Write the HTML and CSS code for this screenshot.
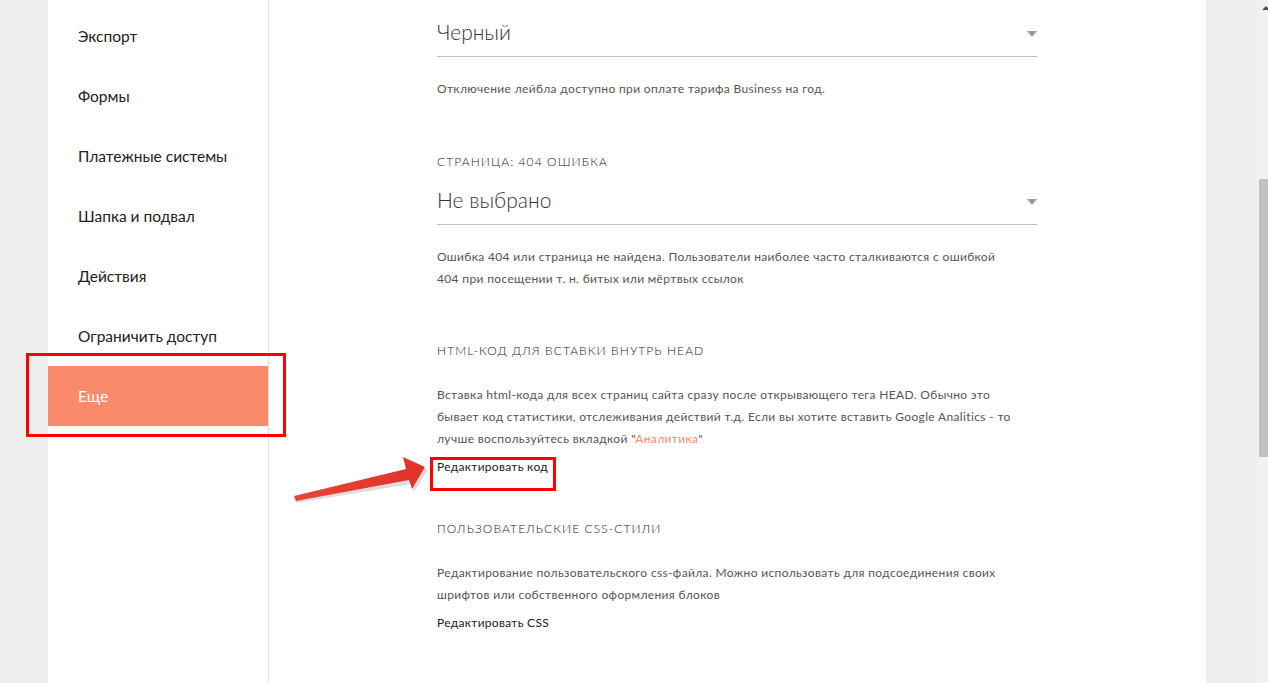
FILE: index.html
```html
<!DOCTYPE html>
<html lang="ru">
<head>
  <meta charset="UTF-8">
  <title>Настройки сайта</title>
  <link rel="stylesheet" href="styles.css">
</head>

<body>
  <div class="panel">
    <aside class="sidebar">
      <ul>
        <li><a href="#">Экспорт</a></li>
        <li><a href="#">Формы</a></li>
        <li><a href="#">Платежные системы</a></li>
        <li><a href="#">Шапка и подвал</a></li>
        <li><a href="#">Действия</a></li>
        <li><a href="#">Ограничить доступ</a></li>
        <li class="active"><a href="#">Еще</a><span class="mark mark-menu"></span></li>
      </ul>
    </aside>

    <main class="content">
      <div class="section">
        <div class="select">Черный<span class="caret"></span></div>
        <p class="note">Отключение лейбла доступно при оплате тарифа Business на год.</p>
      </div>

      <div class="section">
        <h3>Страница: 404 ошибка</h3>
        <div class="select">Не выбрано<span class="caret"></span></div>
        <p class="note">Ошибка 404 или страница не найдена. Пользователи наиболее часто сталкиваются с ошибкой 404&nbsp;при посещении т. н. битых или мёртвых ссылок</p>
      </div>

      <div class="section">
        <h3>HTML-код для вставки внутрь HEAD</h3>
        <p class="desc">Вставка html-кода для всех страниц сайта сразу после открывающего тега HEAD. Обычно это бывает&nbsp;код статистики, отслеживания действий т.д. Если вы хотите вставить Google Analitics - то лучше воспользуйтесь вкладкой "<a href="#">Аналитика</a>"</p>
        <a class="edit" href="#">Редактировать код<span class="mark mark-edit"></span></a>
      </div>

      <div class="section section-tight">
        <h3>Пользовательские css-стили</h3>
        <p class="desc">Редактирование пользовательского css-файла. Можно использовать для подсоединения своих шрифтов или собственного оформления блоков</p>
        <a class="edit" href="#">Редактировать CSS</a>
      </div>
    </main>
  </div>

  <!-- annotation arrow -->
  <svg class="arrow" width="1268" height="683" viewBox="0 0 1268 683">
    <defs>
      <linearGradient id="arrowFill" x1="0" y1="0" x2="1" y2="0">
        <stop offset="0" stop-color="#e8453a"/>
        <stop offset="1" stop-color="#df3328"/>
      </linearGradient>
    </defs>
    <polygon points="296,503 411,484 414,492 428,470 405,461 407,473 294,497" fill="#bbb" opacity="0.5"/>
    <polygon points="294,496 406,469 403,457 425,467 412,489 409,480 296,501" fill="url(#arrowFill)"/>
  </svg>

  <div class="scrollbar">
    <span class="scroll-up"></span>
    <span class="thumb"></span>
  </div>
</body>
</html>
```

FILE: styles.css
```css
body {
  margin: 0;
  padding: 0 0 0 48px;
  background-color: #ededed;
  font-family: Lato, "Liberation Sans", sans-serif;
  color: #333;
  overflow: hidden;
}

.panel {
  display: flex;
  width: 1158px;
  min-height: 683px;
  background-color: #fff;
}

.sidebar {
  width: 220px;
  flex-shrink: 0;
  border-right: 1px solid #e2e2e2;
}

.sidebar ul {
  list-style-type: none;
  margin: 0;
  padding: 6px 0 0;
}

.sidebar li {
  position: relative;
  height: 60px;
}

.sidebar li a {
  display: block;
  padding: 1px 0 0 30px;
  line-height: 59px;
  font-size: 15.5px;
  color: #222;
  text-decoration: none;
}

.sidebar li.active {
  background-color: #f98a6c;
}

.sidebar li.active a {
  color: #fff;
}

/* red annotation frames */
.mark {
  position: absolute;
  border: 3px solid #ff0000;
  box-sizing: border-box;
  pointer-events: none;
}

.mark-menu {
  left: -22px;
  top: -13px;
  width: 260px;
  height: 84px;
}

.mark-edit {
  left: -7px;
  top: 1px;
  width: 126px;
  height: 34px;
}

.content {
  padding: 8px 0 0 168px;
  width: 600px;
}

.section + .section {
  margin-top: 50px;
}

.section:nth-child(2) {
  margin-top: 51px;
}

.section.section-tight {
  margin-top: 40px;
}

.section h3 {
  margin: 0 0 3px;
  font-size: 12px;
  font-weight: 300;
  line-height: 22px;
  letter-spacing: 1.1px;
  text-transform: uppercase;
  color: #222;
}

.select {
  position: relative;
  height: 48px;
  line-height: 48px;
  font-size: 21px;
  font-weight: 300;
  color: #333;
  border-bottom: 1px solid #bdbdbd;
}

.caret {
  position: absolute;
  right: 0;
  top: 23px;
  border-left: 5px solid transparent;
  border-right: 5px solid transparent;
  border-top: 6px solid #9a9a9a;
}

.note {
  margin: 21px 0 0;
  font-size: 12px;
  line-height: 22px;
  letter-spacing: 0.35px;
  color: #555;
}

.desc {
  margin: 22px 0 5px;
  font-size: 12px;
  line-height: 22px;
  letter-spacing: 0.35px;
  color: #555;
}

.desc a {
  color: #f98a6c;
  text-decoration: none;
}

.edit {
  position: relative;
  display: inline-block;
  font-size: 12px;
  line-height: 22px;
  letter-spacing: 0.3px;
  color: #1a1a1a;
  text-decoration: none;
}

.arrow {
  position: absolute;
  left: 0;
  top: 0;
  pointer-events: none;
}

.scrollbar {
  position: fixed;
  top: 0;
  right: 0;
  width: 11px;
  height: 683px;
  background-color: #f1f1f1;
}

.scroll-up {
  position: absolute;
  left: 5px;
  top: 6px;
  border-left: 4px solid transparent;
  border-right: 4px solid transparent;
  border-bottom: 4px solid #505050;
}

.thumb {
  position: absolute;
  left: 2px;
  top: 179px;
  width: 9px;
  height: 278px;
  background-color: #c1c1c1;
}
```
